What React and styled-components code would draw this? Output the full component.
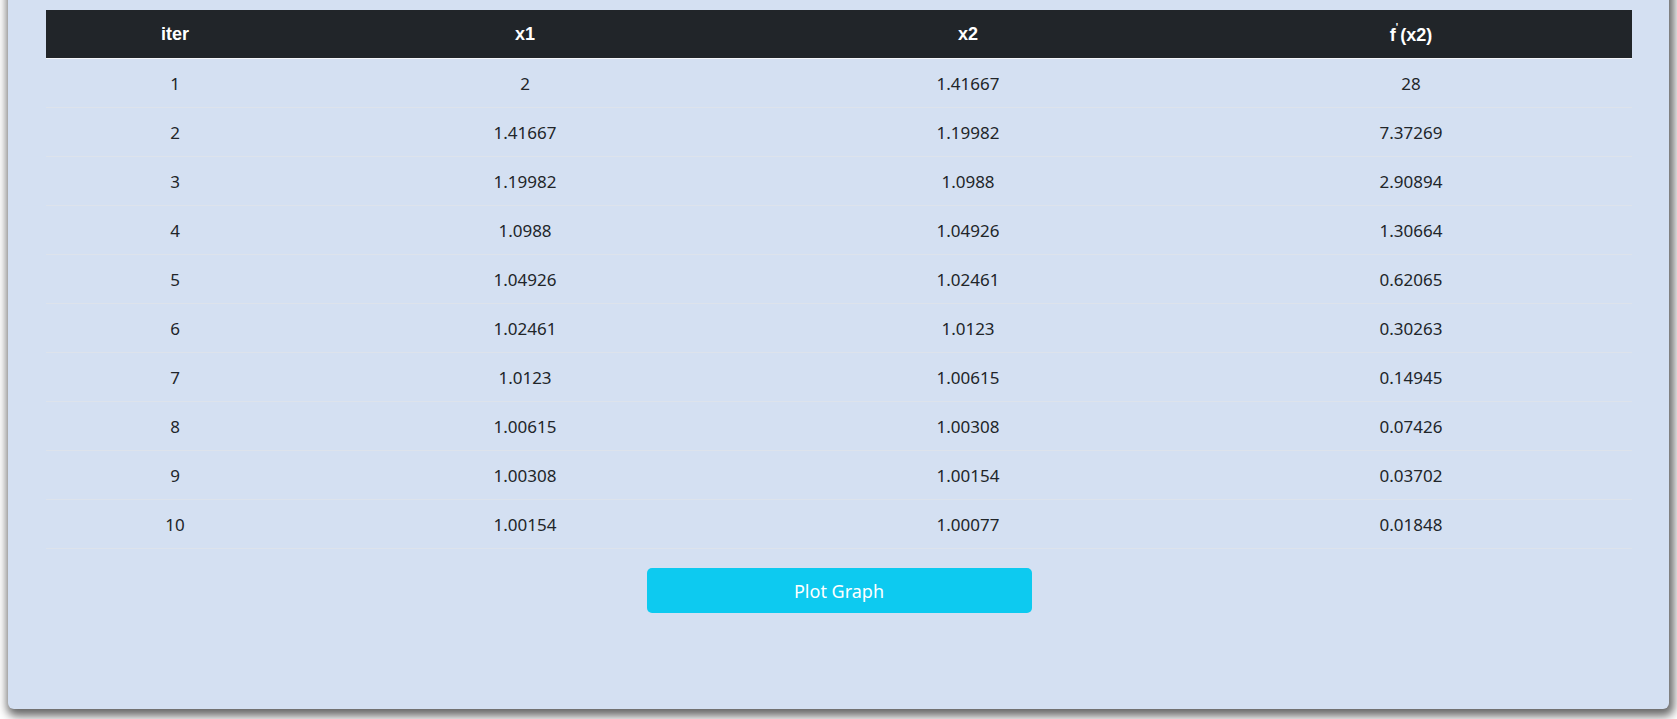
import React from "react";
import styled, { createGlobalStyle } from "styled-components";

const Global = createGlobalStyle`
  html { background: #ffffff; min-height: 100%; }
  body {
    margin: 0;
    padding: 0 8px 12px;
    font-family: "Noto Sans", "Open Sans", sans-serif;
    color: #212529;
  }
`;

const Card = styled.div`
  margin-top: -22px;
  height: 731px;
  box-sizing: border-box;
  padding: 32px 37px 0 38px;
  background: #d4e0f2;
  border-radius: 6px;
  box-shadow: 2px 4px 10px 3px rgba(0, 0, 0, 0.6);
  display: flex;
  flex-direction: column;
  align-items: center;
`;

const Table = styled.table`
  width: 100%;
  border-collapse: collapse;
  table-layout: fixed;
  text-align: center;
`;

const HeadCell = styled.th`
  background: #212529;
  color: #ffffff;
  font-family: "Liberation Sans", Arial, sans-serif;
  font-weight: 700;
  font-size: 18px;
  height: 48px;
  padding: 0;
  border-bottom: 1px solid #f4f6f9;
`;

const Sup = styled.sup`
  font-size: 10px;
  vertical-align: 10px;
  margin-right: 2px;
`;

const Cell = styled.td`
  font-size: 17px;
  height: 48px;
  padding: 0;
  border-bottom: 1px solid #dde3ec;
`;

const Button = styled.button`
  margin-top: 19px;
  width: 385px;
  height: 45px;
  border: none;
  border-radius: 5px;
  background: #0dcaf0;
  color: #ffffff;
  font-family: "Noto Sans", "Open Sans", sans-serif;
  font-size: 18px;
  cursor: pointer;
`;

const rows = [
  [1, "2", "1.41667", "28"],
  [2, "1.41667", "1.19982", "7.37269"],
  [3, "1.19982", "1.0988", "2.90894"],
  [4, "1.0988", "1.04926", "1.30664"],
  [5, "1.04926", "1.02461", "0.62065"],
  [6, "1.02461", "1.0123", "0.30263"],
  [7, "1.0123", "1.00615", "0.14945"],
  [8, "1.00615", "1.00308", "0.07426"],
  [9, "1.00308", "1.00154", "0.03702"],
  [10, "1.00154", "1.00077", "0.01848"],
];

export default function App() {
  return (
    <>
      <Global />
      <Card>
        <Table>
          <colgroup>
            <col style={{ width: 258 }} />
            <col style={{ width: 442 }} />
            <col style={{ width: 444 }} />
            <col />
          </colgroup>
          <thead>
            <tr>
              <HeadCell>iter</HeadCell>
              <HeadCell>x1</HeadCell>
              <HeadCell>x2</HeadCell>
              <HeadCell>
                f<Sup>'</Sup>(x2)
              </HeadCell>
            </tr>
          </thead>
          <tbody>
            {rows.map((r) => (
              <tr key={r[0]}>
                {r.map((v, i) => (
                  <Cell key={i}>{v}</Cell>
                ))}
              </tr>
            ))}
          </tbody>
        </Table>
        <Button>Plot Graph</Button>
      </Card>
    </>
  );
}
